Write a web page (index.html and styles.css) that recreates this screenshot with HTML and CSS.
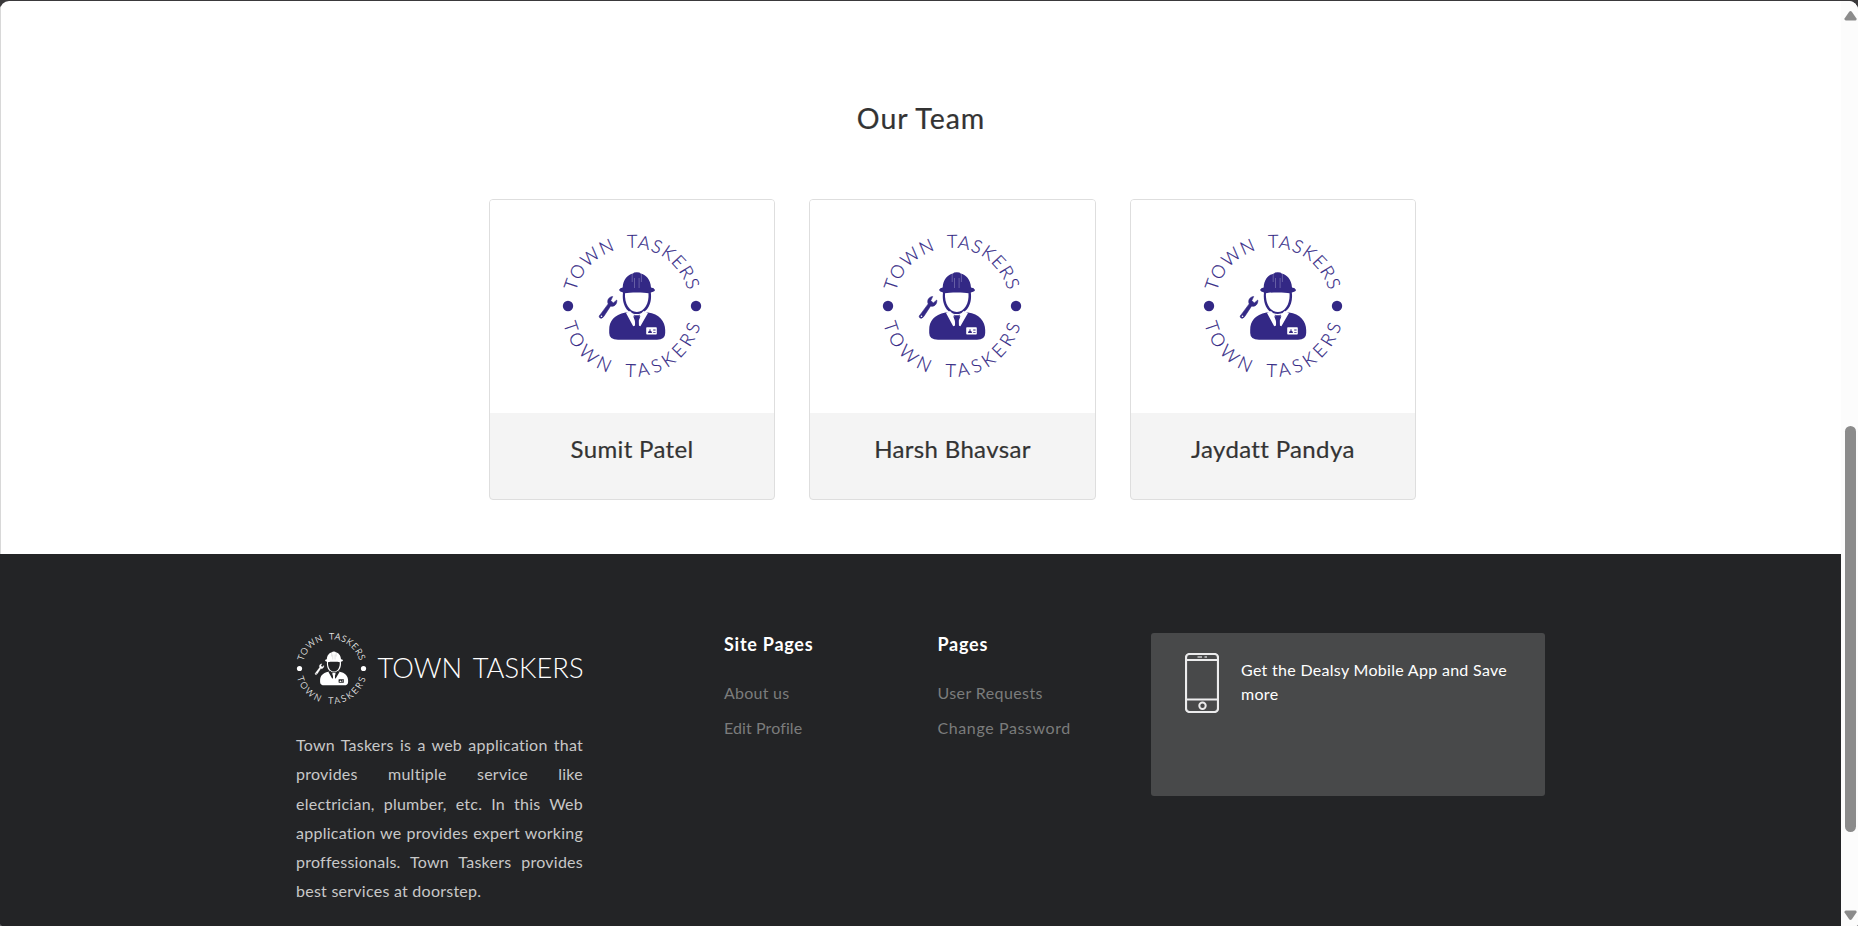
FILE: index.html
```html
<!DOCTYPE html>
<html lang="en">
<head>
<meta charset="utf-8">
<title>Town Taskers</title>
<link rel="stylesheet" href="styles.css">
</head>
<body>
<svg class="defs" width="0" height="0" aria-hidden="true">
  <defs>
    <path id="arc-top" d="M-56.200 -14.500A58 58 0 0 1 57 -11"/>
    <path id="arc-bottom" d="M-68.700 17.800A71 71 0 0 0 69.500 14.500"/>
    <symbol id="emblem" viewBox="-75 -75 150 150">
      <g fill="currentColor">
        <circle cx="-64" cy="0" r="5.2"/>
        <circle cx="64" cy="0" r="5.2"/>
        <path d="M-13 -16Q-12 -18.4 -9.3 -18.6C-9 -27 -4 -31.5 1 -32.6Q1.5 -33.8 4.8 -33.8T8.6 -32.6C13.6 -31.5 18.6 -27 19 -18.6Q22.300 -18.4 23 -16Q22.500 -14 18.800 -13.600C20.500 -1 14 8 4.800 8S-10.500 -1 -9 -13.600Q-12.300 -14 -13 -16Z"/>
        <path d="M-1.500 6.500L-6.500 6.500C-18 9 -22.800 15 -22.800 24V27Q-22.800 33.700 -14 33.700H25Q33.200 33.700 33.200 27V24C33.200 15 27 8 16 6.500L11 6.500L4.800 10Z"/>
        <path d="M-31.400 8.200L-23.800 -2.100C-25.200 -5.500 -23.500 -9 -19.300 -9.500L-21.200 -5.500L-18.700 -3L-15.200 -6C-14.800 -1.500 -18 1 -21.500 .2L-28.400 10.700Q-30.500 13.200 -32.200 11.800T-31.400 8.200Z" stroke="currentColor" stroke-width=".6"/>
      </g>
      <g fill="var(--ground)">
        <path d="M-7 -12.700C-3 -13.800 12.500 -13.800 16.500 -12.700C17.300 -3 12.500 6 4.800 6S-7.700 -3 -7 -12.700Z"/>
        <path d="M-6 7L1.200 20.200L3.500 19.500L2.800 14.500L1.200 10.200Q4.800 11 8.400 10.200L6.800 14.500L6.600 19.500L8.400 20.200L16 7L11.500 5Q4.800 13 -2 5Z"/>
        <rect x="14.200" y="21.300" width="10.600" height="7.200" rx=".8"/>
        <circle cx="-30.500" cy="10.200" r=".8"/>
      </g>
      <path d="M1.500 9.200H8.300L6 12.500L7 20.500H2.800L3.800 12.500Z" fill="currentColor"/>
      <path d="M16 27q0-2 1.500-2.200v-1.500h1v1.500q1.500.2 1.500 2.200zM21.200 23.600h2.400v.8h-2.400zM21.200 26h2.400v.8h-2.400z" fill="currentColor"/>
      <path d="M.2 -32V-24M9.400 -32V-24M2.500 -28V-18M7.100 -28V-18" stroke="var(--ground)" stroke-width=".5" opacity=".5"/>
      <g class="ring-text" fill="currentColor">
        <text><textPath href="#arc-top" textLength="152">TOWN&#160;TASKERS</textPath></text>
        <text><textPath href="#arc-bottom" textLength="185">TOWN&#160;TASKERS</textPath></text>
      </g>
    </symbol>
  </defs>
</svg>
<div class="window">
  <div class="page">
    <section class="team">
      <h2>Our Team</h2>
      <div class="cards">
        <article class="card">
          <div class="photo"><svg class="badge"><use href="#emblem"/></svg></div>
          <h3>Sumit Patel</h3>
        </article>
        <article class="card">
          <div class="photo"><svg class="badge"><use href="#emblem"/></svg></div>
          <h3>Harsh Bhavsar</h3>
        </article>
        <article class="card">
          <div class="photo"><svg class="badge"><use href="#emblem"/></svg></div>
          <h3>Jaydatt Pandya</h3>
        </article>
      </div>
    </section>
    <footer>
      <div class="about">
        <div class="brand">
          <svg class="mark"><use href="#emblem"/></svg>
          <svg class="wordmark" viewBox="0 0 208 40"><text x="0.500" y="29" textLength="206" lengthAdjust="spacingAndGlyphs">TOWN TASKERS</text></svg>
        </div>
        <p>
          <span>Town Taskers is a web application that</span>
          <span>provides multiple service like</span>
          <span>electrician, plumber, etc. In this Web</span>
          <span>application we provides expert working</span>
          <span>proffessionals. Town Taskers provides</span>
          <span class="last">best services at doorstep.</span>
        </p>
      </div>
      <nav>
        <h4>Site Pages</h4>
        <a>About us</a>
        <a class="tight">Edit Profile</a>
      </nav>
      <nav>
        <h4>Pages</h4>
        <a class="mid">User Requests</a>
        <a class="wide">Change Password</a>
      </nav>
      <aside>
        <svg class="phone" viewBox="0 0 34 60" fill="none" stroke="#ececed">
          <rect x="1" y="1" width="32" height="58" rx="3.500" stroke-width="2.200"/>
          <path d="M2 7H32M2 46.500H32" stroke-width="2"/>
          <circle cx="17.500" cy="52.700" r="3.200" stroke-width="2"/>
          <path d="M12.500 4H17M19.500 4H22" stroke-width="2" stroke="#a8a9aa"/>
        </svg>
        <p>Get the Dealsy Mobile App and Save<br>more</p>
      </aside>
    </footer>
  </div>
  <div class="scrollbar">
    <svg viewBox="0 0 17 926">
      <path d="M3.500 18.500L8 12Q9.500 10 11 12L15.500 18.500Q16 20.500 14.500 20.500H5Q3 20.500 3.500 18.500Z"/>
      <rect x="4" y="426" width="11" height="406" rx="5.500"/>
      <path d="M3.500 912.500L8 919Q9.500 921 11 919L15.500 912.500Q16 910.500 14.500 910.500H5Q3 910.500 3.500 912.500Z"/>
    </svg>
  </div>
</div>
</body>
</html>
```
FILE: styles.css
```css
* { box-sizing: border-box; }
body {
  margin: 0;
  height: 926px;
  overflow: hidden;
  background: #3a393b;
  font-family: Lato, "Open Sans", sans-serif;
}
.defs { position: absolute; }
h2, h3, h4, p { margin: 0; font-weight: 400; }
.window {
  display: flex;
  height: 925px;
  margin-top: 1px;
  border-radius: 9px 9px 2px 2px;
  overflow: hidden;
  background: #fff;
}
.page { width: 1841px; display: flex; flex-direction: column; }
.team {
  height: 553px;
  padding-top: 97px;
  border-left: 1px solid #d8d8d8;
  color: #333;
}
.team h2 {
  height: 40px;
  line-height: 40px;
  font-size: 28.5px;
  letter-spacing: .95px;
  text-align: center;
  -webkit-text-stroke: .2px #333;
}
.cards { display: flex; gap: 34.200px; margin: 61px 0 0 488px; }
.card {
  width: 286.200px;
  height: 301px;
  border: 1px solid #dedede;
  border-radius: 4px;
  overflow: hidden;
  background: #f4f4f4;
}
.photo {
  --ground: #fff;
  height: 213px;
  background: #fff;
  color: #332885;
  display: flex;
  justify-content: center;
  padding-top: 31px;
}
.badge { width: 150px; height: 150px; }
.card h3 {
  padding-top: 20px;
  line-height: 32px;
  font-size: 24px;
  letter-spacing: .35px;
  text-align: center;
  -webkit-text-stroke: .2px #333;
}
.ring-text { font: 300 18px Lato, sans-serif; word-spacing: 5px; stroke: currentColor; stroke-width: .2px; }
footer {
  --ground: #232426;
  flex: 1;
  background: #232426;
  color: #fff;
  display: grid;
  grid-template-columns: 428px 213.500px 213.500px 394px;
  align-items: start;
  padding: 79px 0 0 296px;
}
.about { width: 287px; }
.brand { display: flex; align-items: center; height: 71px; }
.mark { flex: none; width: 75px; height: 75px; margin-left: -2px; }
.wordmark { flex: none; width: 208px; height: 40px; margin-left: 8px; overflow: visible; }
.wordmark text { font: 300 27px Lato, sans-serif; word-spacing: 4px; fill: #fff; }
.about p { margin-top: 26px; color: #c8c8c8; font-size: 16px; letter-spacing: .25px; line-height: 29.300px; }
.about span { display: block; text-align: justify; text-align-last: justify; white-space: nowrap; }
.about .last { text-align-last: left; }
nav { display: flex; flex-direction: column; font-size: 16px; letter-spacing: .25px; }
nav h4 { font-size: 18px; font-weight: 700; letter-spacing: .75px; line-height: 24px; margin: -1px 0 19px; }
nav a { color: #7b7c7c; line-height: 35px; }
nav .tight { letter-spacing: .1px; }
nav .mid { letter-spacing: .4px; }
nav .wide { letter-spacing: .6px; }
aside {
  display: flex;
  height: 163px;
  padding: 20px 0 0 34px;
  border-radius: 3px;
  background: #48494a;
}
.phone { width: 34px; height: 60px; }
aside p { margin: 5px 0 0 22px; font-size: 16px; letter-spacing: .3px; line-height: 24px; white-space: nowrap; }
.scrollbar { width: 17px; background: #fcfcfc; }
.scrollbar svg { display: block; width: 17px; height: 926px; margin-top: -1px; fill: #8b8b8b; }
```
